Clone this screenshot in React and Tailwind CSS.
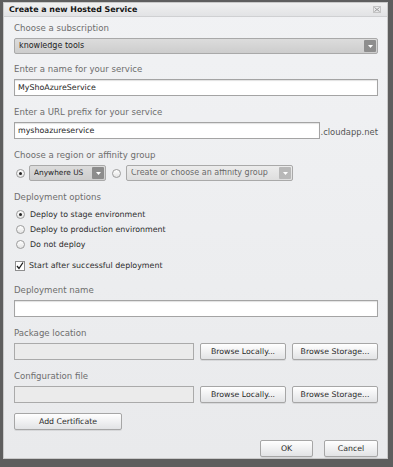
import { useState } from "react";

const font = { fontFamily: '"DejaVu Sans", Verdana, sans-serif' };

const Label = ({ children, className = "" }) => (
  <div className={`h-[13px] leading-[13px] text-[8.6px] text-[#6d6d6d] mb-[3px] ${className}`}>{children}</div>
);

const Caret = ({ color = "#fff" }) => (
  <svg width="5" height="3" viewBox="0 0 5 3">
    <path d="M0 0 L5 0 L2.5 3 Z" fill={color} />
  </svg>
);

const Select = ({ value, className = "", textClass = "text-[8px]", dim = false, btn = "bg-[#8f8f8f]" }) => (
  <div
    className={`flex items-center h-[16px] border border-[#a9a9a9] rounded-[2px] pl-[4px] pr-[1px] ${
      dim ? "bg-gradient-to-b from-[#ececec] to-[#dedede] text-[#6a6a6a]" : "bg-gradient-to-b from-[#dcdcdc] to-[#cdcdcd] text-[#1e1e1e]"
    } ${className}`}
  >
    <span className={`flex-1 leading-none whitespace-nowrap overflow-hidden ${textClass}`}>{value}</span>
    <span className={`flex items-center justify-center w-[12px] h-[12px] rounded-[1px] ${btn}`}>
      <Caret />
    </span>
  </div>
);

const TextInput = ({ value, className = "" }) => (
  <div
    className={`flex items-center h-[17px] bg-white border border-[#a4a4a4] shadow-[inset_0_1px_1px_rgba(0,0,0,0.12)] px-[3px] text-[7.9px] text-[#1e1e1e] ${className}`}
  >
    {value}
  </div>
);

const Radio = ({ checked }) => (
  <span className="flex items-center justify-center w-[9px] h-[9px] rounded-full border border-[#9b9b9b] bg-gradient-to-b from-[#ffffff] to-[#e4e4e4]">
    {checked && <span className="w-[3px] h-[3px] rounded-full bg-[#222]" />}
  </span>
);

const Button = ({ children, className = "" }) => (
  <button
    type="button"
    className={`h-[17px] flex items-center justify-center border border-[#a6a6a6] rounded-[2px] bg-gradient-to-b from-[#ffffff] to-[#e2e3e5] shadow-[0_1px_0_rgba(0,0,0,0.08)] text-[7.8px] text-[#2a2a2a] ${className}`}
  >
    {children}
  </button>
);

export default function App() {
  const [deploy, setDeploy] = useState("stage");
  const [start, setStart] = useState(true);

  const options = [
    ["stage", "Deploy to stage environment"],
    ["prod", "Deploy to production environment"],
    ["none", "Do not deploy"],
  ];

  return (
    <div className="w-[393px] h-[467px] bg-[#5e5e5e] pt-[2px] pl-[3px]" style={font}>
      <div className="w-[385px] h-[457px] flex flex-col border border-[#c9c9c9] bg-gradient-to-b from-[#f1f2f4] to-[#e9eaec]">
        <div className="h-[14px] flex items-center justify-between px-[5px] bg-gradient-to-b from-[#f0f0f0] to-[#e2e3e5] border-b border-[#cfd0d2]">
          <span className="text-[7.9px] font-bold text-[#141414] leading-none">Create a new Hosted Service</span>
          <svg width="8" height="7" viewBox="0 0 8 7" className="mr-[1px]">
            <rect x="0.5" y="0.5" width="7" height="6" fill="none" stroke="#c4c4c4" />
            <path d="M1.5 1.5 L6.5 5.5 M6.5 1.5 L1.5 5.5" stroke="#9a9a9a" />
          </svg>
        </div>

        <div className="flex-1 flex flex-col pl-[10px] pr-[9px] pt-[5px]">
          <Label>Choose a subscription</Label>
          <Select value="knowledge tools" btn="bg-[#8e8e8e]" />

          <Label className="mt-[9px]">Enter a name for your service</Label>
          <TextInput value="MyShoAzureService" />

          <Label className="mt-[10px]">Enter a URL prefix for your service</Label>
          <div className="flex items-end">
            <TextInput value="myshoazureservice" className="w-[310px]" />
            <span className="text-[8.4px] text-[#555] leading-none mb-[3px]">.cloudapp.net</span>
          </div>

          <Label className="mt-[10px]">Choose a region or affinity group</Label>
          <div className="flex items-center h-[16px]">
            <span className="ml-[2px]">
              <Radio checked />
            </span>
            <Select
              value="Anywhere US"
              textClass="text-[7.4px]"
              className="w-[77px] ml-[4px] pl-[3px]"
              btn="bg-[#8c8c8c]"
            />
            <span className="ml-[6px]">
              <Radio />
            </span>
            <Select value="Create or choose an affinity group" dim className="w-[167px] ml-[5px]" btn="bg-[#b8b8b8]" />
          </div>

          <Label className="mt-[10px] mb-0">Deployment options</Label>
          {options.map(([key, text]) => (
            <div key={key} className="flex items-center h-[15px] cursor-pointer" onClick={() => setDeploy(key)}>
              <span className="ml-[2px]">
                <Radio checked={deploy === key} />
              </span>
              <span className="ml-[5px] text-[7.9px] text-[#2c2c2c]">{text}</span>
            </div>
          ))}

          <div className="flex items-center h-[15px] mt-[6px] cursor-pointer" onClick={() => setStart(!start)}>
            <span className="ml-[1px] w-[10px] h-[10px] border border-[#8f8f8f] bg-white flex items-center justify-center">
              {start && (
                <svg width="8" height="8" viewBox="0 0 8 8">
                  <path d="M1 4 L3 6.5 L7 0.5" fill="none" stroke="#1a1a1a" strokeWidth="1.3" />
                </svg>
              )}
            </span>
            <span className="ml-[4px] text-[7.9px] text-[#2c2c2c]">Start after successful deployment</span>
          </div>

          <Label className="mt-[11px]">Deployment name</Label>
          <TextInput value="" className="border-[#9fc6cf]" />

          <Label className="mt-[10px]">Package location</Label>
          <div className="flex items-center">
            <div className="w-[180px] h-[17px] border border-[#aaaaaa] bg-[#ebebeb]" />
            <Button className="w-[86px] ml-[6px]">Browse Locally...</Button>
            <Button className="w-[86px] ml-[6px]">Browse Storage...</Button>
          </div>

          <Label className="mt-[10px]">Configuration file</Label>
          <div className="flex items-center">
            <div className="w-[180px] h-[17px] border border-[#aaaaaa] bg-[#ebebeb]" />
            <Button className="w-[86px] ml-[6px]">Browse Locally...</Button>
            <Button className="w-[86px] ml-[6px]">Browse Storage...</Button>
          </div>

          <Button className="w-[108px] mt-[10px] h-[16px]">Add Certificate</Button>

          <div className="flex justify-end mt-[10px] gap-[11px]">
            <Button className="w-[53px]">OK</Button>
            <Button className="w-[54px]">Cancel</Button>
          </div>
        </div>
      </div>
    </div>
  );
}
